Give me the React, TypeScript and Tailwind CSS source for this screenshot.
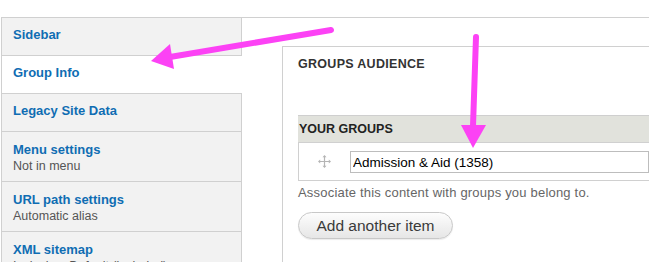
import React from 'react';

type Tab = { title: string; summary?: string; active?: boolean };

const tabs: Tab[] = [
  { title: 'Sidebar' },
  { title: 'Group Info', active: true },
  { title: 'Legacy Site Data' },
  { title: 'Menu settings', summary: 'Not in menu' },
  { title: 'URL path settings', summary: 'Automatic alias' },
  { title: 'XML sitemap', summary: 'Inclusion: Default (included)' },
];

const DragHandle = () => (
  <svg width="13" height="13" viewBox="0 0 13 13" className="text-[#b5b5b5]">
    <path d="M6.5 1v11M1 6.5h11" stroke="currentColor" strokeWidth="1.2" />
    <path d="M6.5 0l2 2.2h-4zM6.5 13l2-2.2h-4zM0 6.5l2.2-2v4zM13 6.5l-2.2-2v4z" fill="currentColor" />
  </svg>
);

export default function App() {
  return (
    <div className="relative w-[649px] h-[262px] overflow-hidden bg-white font-['Liberation_Sans',Arial,sans-serif]">
      <div className="pt-[17px] pl-px">
        <div className="flex border-t border-[#d0d0d0]">
          {/* vertical tab list */}
          <ul className="w-[241px] shrink-0 border-l border-[#d0d0d0]">
            {tabs.map((t) => (
              <li
                key={t.title}
                className={`border-b border-[#d0d0d0] pl-[11px] ${
                  t.summary ? 'h-[50px] pt-[10px]' : 'h-[38px] pt-[9px]'
                } ${t.active ? 'bg-white w-[242px]' : 'bg-[#f2f2f2] border-r'}`}
              >
                <div className="text-[13px] leading-4 font-bold text-[#0f6db3]">{t.title}</div>
                {t.summary && <div className="text-[12.5px] leading-4 text-[#555]">{t.summary}</div>}
              </li>
            ))}
          </ul>

          {/* pane */}
          <div className="flex-1 min-w-0 bg-white pl-[40px] pt-[28px]">
            <div className="border-l border-t border-[#d0d0d0] pl-[15px] pt-[9px] h-[300px]">
              <h2 className="text-[12.5px] leading-4 font-bold text-[#333] tracking-[0.3px]">GROUPS AUDIENCE</h2>
              <div className="mt-[43px]">
                <div className="h-[27px] flex items-center bg-[#e1e2dc] border-t border-[#cfcfcf] pl-px">
                  <span className="text-[12.5px] font-bold text-[#222]">YOUR GROUPS</span>
                </div>
                <div className="h-[39px] flex items-start border-l border-b border-t border-[#d0d0d0] pt-[8px]">
                  <div className="w-[51px] flex justify-center pt-[4px]">
                    <DragHandle />
                  </div>
                  <input
                    readOnly
                    value="Admission & Aid (1358)"
                    className="flex-1 h-[22px] border border-[#bdbdbd] pl-[2px] text-[13.5px] text-black outline-none"
                  />
                </div>
              </div>
              <p className="mt-[4px] text-[13px] leading-4 text-[#666] tracking-[0.2px]">
                Associate this content with groups you belong to.
              </p>
              <button className="mt-[11px] w-[155px] h-[27px] rounded-full border border-[#c8c8c8] bg-gradient-to-b from-[#fdfdfd] to-[#e6e6e6] text-[15.5px] text-[#3a3a3a] shadow-[0_1px_1px_rgba(0,0,0,0.08)]">
                Add another item
              </button>
            </div>
          </div>
        </div>
      </div>

      {/* annotation arrows */}
      <svg className="absolute inset-0 pointer-events-none" width="649" height="262">
        <line x1="331" y1="30" x2="170" y2="57" stroke="#fc42f5" strokeWidth="6" strokeLinecap="round" />
        <polygon points="151,61 170,44 174,69" fill="#fc42f5" />
        <line x1="476" y1="37" x2="473" y2="126" stroke="#fc42f5" strokeWidth="6" strokeLinecap="round" />
        <polygon points="461,125 486,125 473,148" fill="#fc42f5" />
      </svg>
    </div>
  );
}
